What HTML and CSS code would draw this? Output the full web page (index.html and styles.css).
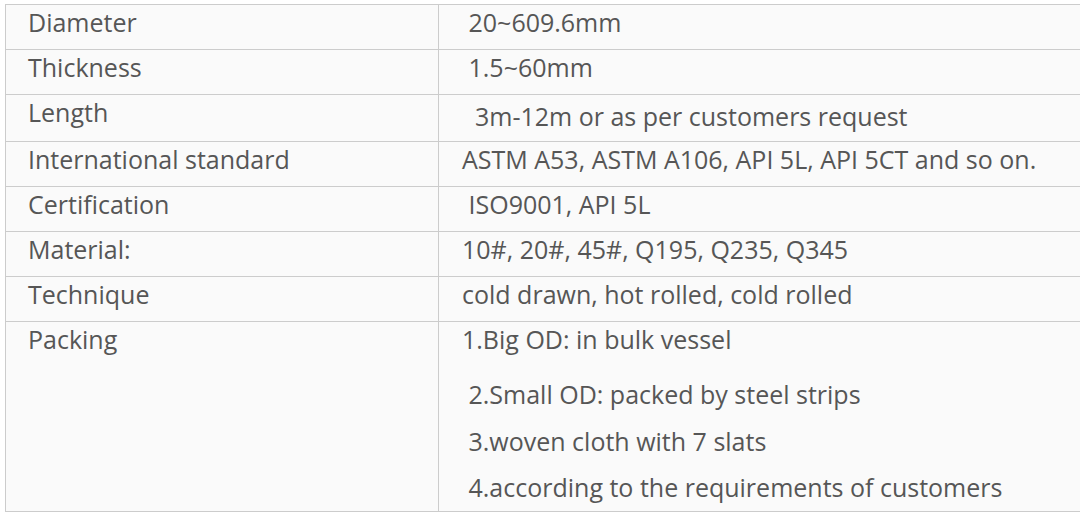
FILE: index.html
```html
<!DOCTYPE html>
<html>
<head>
<meta charset="utf-8">
<link rel="stylesheet" href="styles.css">
</head>
<body>
<table class="spec">
  <colgroup><col class="c-label"><col class="c-value"></colgroup>
  <tbody>
    <tr><td class="label">Diameter</td><td class="value">&nbsp;20~609.6mm</td></tr>
    <tr><td class="label">Thickness</td><td class="value">&nbsp;1.5~60mm</td></tr>
    <tr><td class="label">Length</td><td class="value value-low">&nbsp;&nbsp;3m-12m or as per customers request</td></tr>
    <tr><td class="label">International standard</td><td class="value">ASTM A53, ASTM A106, API 5L, API 5CT and so on.</td></tr>
    <tr><td class="label">Certification</td><td class="value">&nbsp;ISO9001, API 5L</td></tr>
    <tr><td class="label">Material:</td><td class="value">10#, 20#, 45#, Q195, Q235, Q345</td></tr>
    <tr><td class="label">Technique</td><td class="value">cold drawn, hot rolled, cold rolled</td></tr>
    <tr>
      <td class="label">Packing</td>
      <td class="value value-list">
        <p class="pk pk-1">1.Big OD: in bulk vessel</p>
        <p class="pk pk-2">&nbsp;2.Small OD: packed by steel strips</p>
        <p class="pk pk-3">&nbsp;3.woven cloth with 7 slats</p>
        <p class="pk pk-4">&nbsp;4.according to the requirements of customers</p>
      </td>
    </tr>
  </tbody>
</table>
</body>
</html>
```
FILE: styles.css
```css
html, body {
  overflow: hidden;
}
body {
  margin: 4px 0 0 5px;
  background: #ffffff;
  font-family: "Open Sans", "Noto Sans", sans-serif;
  color: #565656;
}
.spec {
  border-collapse: collapse;
  width: 1100px;
  table-layout: fixed;
  background: #fafafa;
  font-size: 25px;
  line-height: 30px;
}
.c-label { width: 433px; }
.spec td {
  border: 1px solid #cccccc;
  vertical-align: top;
  padding: 2px 22px 12px 22px;
  white-space: nowrap;
}
.spec td.value {
  padding-left: 23px;
}
.spec td.value-low {
  padding-top: 6px;
  padding-bottom: 9.5px;
}
.spec td.value-list {
  padding-bottom: 9px;
}
.pk {
  margin: 0;
}
.pk-1 { margin-bottom: 25px; }
.pk-2 { margin-bottom: 17px; }
.pk-3 { margin-bottom: 16px; }
```
